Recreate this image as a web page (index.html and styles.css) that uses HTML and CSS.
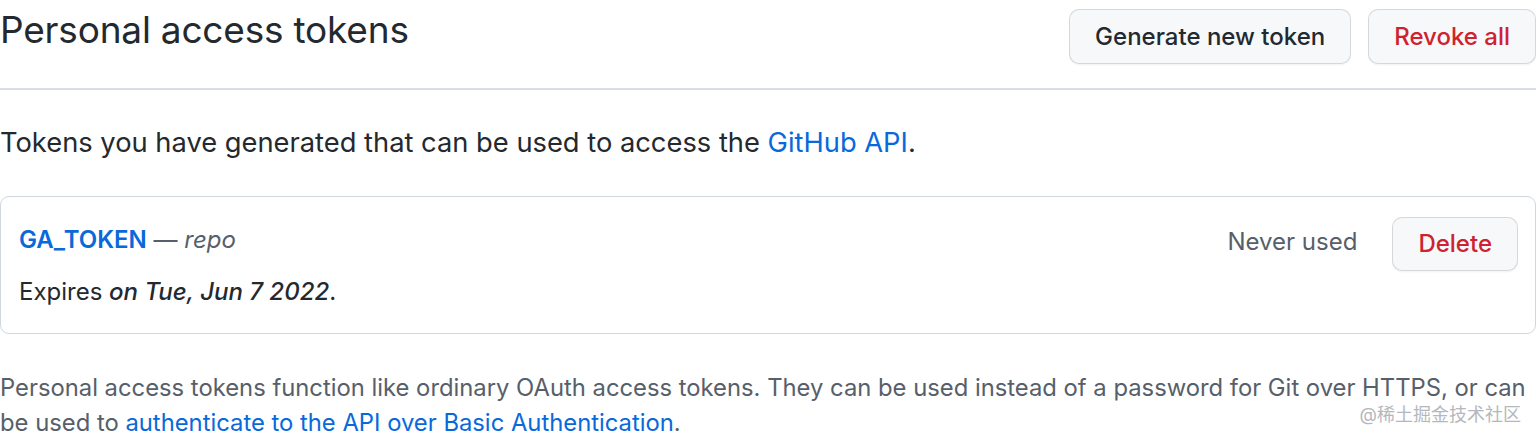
FILE: index.html
```html
<!DOCTYPE html>
<html lang="en">
<head>
<meta charset="utf-8">
<title>Personal access tokens</title>
<link rel="stylesheet" href="styles.css">
</head>
<body>
<div class="page">
  <div class="subhead">
    <h2 class="subhead-title">Personal access tokens</h2>
    <div class="subhead-actions">
      <button class="btn">Generate new token</button>
      <button class="btn btn-danger">Revoke all</button>
    </div>
  </div>
  <p class="intro">Tokens you have generated that can be used to access the <a href="#">GitHub API</a>.</p>
  <div class="box">
    <div class="token-row">
      <div class="token-info">
        <div class="token-name"><a href="#" class="token-link">GA_TOKEN</a> <span class="scope">— <em>repo</em></span></div>
        <div class="token-expiry">Expires <em class="date">on Tue, Jun 7 2022</em>.</div>
      </div>
      <div class="token-meta">
        <span class="last-used">Never used</span>
        <button class="btn btn-danger btn-sm">Delete</button>
      </div>
    </div>
  </div>
  <p class="note">Personal access tokens function like ordinary OAuth access tokens. They can be used instead of a password for Git over HTTPS, or can be used to <a href="#">authenticate to the API over Basic Authentication</a>.</p>
  <div class="watermark">@稀土掘金技术社区</div>
</div>
</body>
</html>
```

FILE: styles.css
```css
* { box-sizing: border-box; }
html, body { margin: 0; padding: 0; background: #fff; }
body {
  font-family: Inter, "Liberation Sans", "Noto Sans CJK SC", sans-serif;
  color: #24292f;
  font-size: 24px;
  line-height: 1.5;
}
.page { position: relative; width: 1536px; height: 440px; overflow: hidden; }
a { color: #0969da; text-decoration: none; }
.subhead {
  display: flex;
  align-items: flex-start;
  justify-content: space-between;
  height: 90px;
  border-bottom: 2px solid #d8dee4;
}
.subhead-title {
  margin: 0;
  padding-top: 6px;
  font-size: 37px;
  font-weight: 400;
  line-height: 48px;
  letter-spacing: -0.2px;
}
.subhead-actions { display: flex; gap: 17px; padding-top: 9px; }
.btn {
  font-family: inherit;
  font-size: 24px;
  font-weight: 500;
  color: #24292f;
  background: #f6f8fa;
  border: 1.5px solid rgba(27,31,36,0.15);
  border-radius: 10px;
  height: 55px;
  padding: 0 25px;
  box-shadow: 0 1.5px 0 rgba(27,31,36,0.04);
}
.btn-danger { color: #cf222e; }
.btn-sm { height: 54px; padding: 0 25px; }
.intro { margin: 0; padding-top: 37px; line-height: 32px; font-size: 27.3px; }
.box {
  margin-top: 37px;
  border: 1.5px solid #d0d7de;
  border-radius: 9px;
  height: 138px;
}
.token-row {
  display: flex;
  justify-content: space-between;
  padding: 19.5px 17px 0 18px;
}
.token-name { line-height: 46px; }
.token-link { font-weight: 600; }
.scope { color: #57606a; }
.token-expiry { margin-top: 13px; line-height: 32px; }
.date { font-weight: 500; }
.token-meta { display: flex; align-items: center; gap: 35px; height: 54px; }
.last-used { color: #57606a; margin-top: -4px; }
.note { margin: 0; padding-top: 36px; color: #57606a; line-height: 35px; font-size: 23.8px; }
.watermark {
  position: absolute;
  right: 15px;
  bottom: 15px;
  font-size: 18px;
  color: #b4b8bd;
  line-height: 20px;
}
```
